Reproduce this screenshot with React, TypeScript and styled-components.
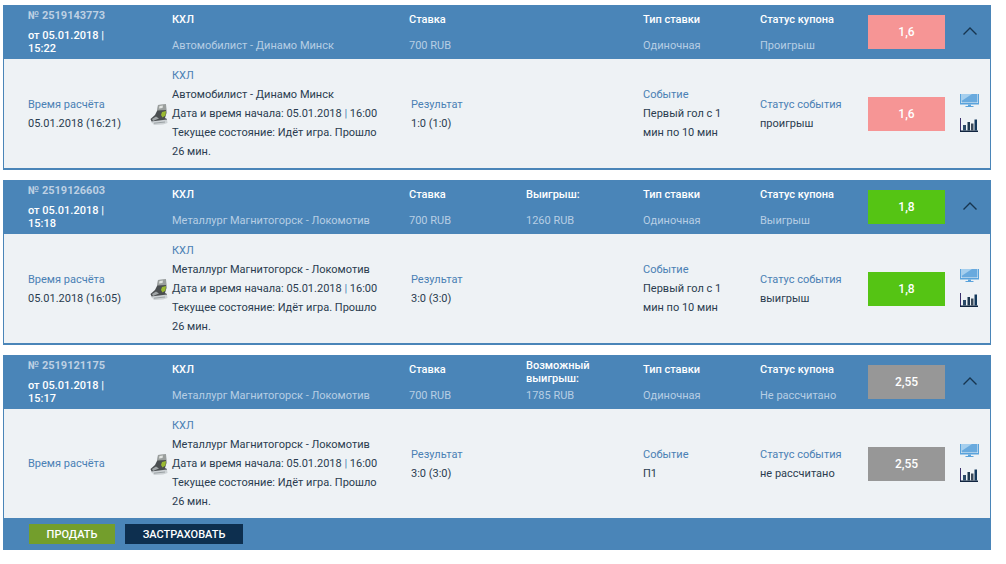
import React from 'react';
import styled, { createGlobalStyle } from 'styled-components';

const GlobalStyle = createGlobalStyle`
  html, body {
    margin: 0;
    padding: 0;
    background: #fff;
  }
  body {
    font-family: Roboto, "Liberation Sans", sans-serif;
    font-size: 11px;
  }
`;

type Coupon = {
  id: string;
  date: string;
  match: string;
  stake: string;
  winLabel?: string;
  winTall?: boolean;
  win?: string;
  status: string;
  coef: string;
  coefColor: string;
  calcTime?: string;
  result: string;
  event: string[];
  eventStatus: string;
  footer?: boolean;
};

const coupons: Coupon[] = [
  {
    id: '2519143773',
    date: 'от 05.01.2018 | 15:22',
    match: 'Автомобилист - Динамо Минск',
    stake: '700 RUB',
    status: 'Проигрыш',
    coef: '1,6',
    coefColor: '#f69595',
    calcTime: '05.01.2018 (16:21)',
    result: '1:0 (1:0)',
    event: ['Первый гол с 1', 'мин по 10 мин'],
    eventStatus: 'проигрыш',
  },
  {
    id: '2519126603',
    date: 'от 05.01.2018 | 15:18',
    match: 'Металлург Магнитогорск - Локомотив',
    stake: '700 RUB',
    winLabel: 'Выигрыш:',
    win: '1260 RUB',
    status: 'Выигрыш',
    coef: '1,8',
    coefColor: '#55c414',
    calcTime: '05.01.2018 (16:05)',
    result: '3:0 (3:0)',
    event: ['Первый гол с 1', 'мин по 10 мин'],
    eventStatus: 'выигрыш',
  },
  {
    id: '2519121175',
    date: 'от 05.01.2018 | 15:17',
    match: 'Металлург Магнитогорск - Локомотив',
    stake: '700 RUB',
    winLabel: 'Возможный выигрыш:',
    winTall: true,
    win: '1785 RUB',
    status: 'Не рассчитано',
    coef: '2,55',
    coefColor: '#979797',
    result: '3:0 (3:0)',
    event: ['П1'],
    eventStatus: 'не рассчитано',
    footer: true,
  },
];

const Skate = () => (
  <svg width="18" height="21" viewBox="0 0 18 21">
    <path d="M8 1 L16 0.5 L16.5 9 L15 14 L17 15 L17 17 L2 18.5 L0.5 15 L5 11 L7.5 6 Z" fill="#4a4e50" />
    <path d="M8 1 L16 0.5 L16 6 L7.5 6.5 Z" fill="#9a9f9d" />
    <path d="M9.5 2 L13 1.5 L12.5 4 L9 4.5 Z" fill="#e2e5e2" />
    <path d="M12 8 L16 7 L15.5 11.5 L12.5 13.5 L11 11 Z" fill="#9aba32" />
    <path d="M2 15 L6 12.5 L9 14.5 L3 17 Z" fill="#a0a5a7" />
    <path d="M1 17.5 L17 15.5 L17.5 19 L13 20.5 L4 21 Z" fill="#cdd2d5" />
    <path d="M4 19.2 L15 18" stroke="#9aa1a4" strokeWidth="1" />
  </svg>
);

const MonitorIcon = () => (
  <svg width="19" height="13" viewBox="0 0 19 13">
    <rect x="0" y="0" width="1" height="9" fill="#5aa3dc" />
    <rect x="18" y="0" width="1" height="9" fill="#5aa3dc" />
    <rect x="0" y="9" width="19" height="1.5" fill="#5aa3dc" />
    <rect x="1.5" y="0" width="16" height="8.5" fill="#69aade" />
    <path d="M1.5 0 L12 0 L1.5 7 Z" fill="#a5cfee" />
    <rect x="8" y="10.5" width="3" height="1.5" fill="#5aa3dc" />
    <rect x="5.5" y="12" width="8" height="1" fill="#5aa3dc" />
  </svg>
);

const ChartIcon = () => (
  <svg width="18" height="14" viewBox="0 0 18 14">
    <rect x="0" y="0" width="1" height="14" fill="#3a2f6b" />
    <rect x="0" y="12.5" width="18" height="1.5" fill="#10243f" />
    <rect x="3" y="7" width="3" height="5.5" fill="#2b4a68" />
    <rect x="7.5" y="4" width="2.5" height="8.5" fill="#1f3850" />
    <rect x="11" y="5.5" width="2.5" height="7" fill="#3b4a5a" />
    <rect x="14.5" y="1.5" width="2.5" height="11" fill="#14395c" />
  </svg>
);

const Chevron = () => (
  <svg width="14" height="8" viewBox="0 0 14 8">
    <path d="M0.5 7.5 L7 1 L13.5 7.5" fill="none" stroke="#17354f" strokeWidth="1.4" />
  </svg>
);

const App = () => (
  <>
    <GlobalStyle />
    <Page>
      {coupons.map((c) => (
        <Card key={c.id} $footer={c.footer}>
          <Header>
            <IdCol>
              <IdNumber>№ {c.id}</IdNumber>
              <IdDate>{c.date}</IdDate>
            </IdCol>
            <HeadCol>
              <HeadLabel>КХЛ</HeadLabel>
              <HeadValue>{c.match}</HeadValue>
            </HeadCol>
            <HeadCol>
              <HeadLabel>Ставка</HeadLabel>
              <HeadValue>{c.stake}</HeadValue>
            </HeadCol>
            <HeadCol>
              {c.winLabel && <HeadLabel $tall={c.winTall}>{c.winLabel}</HeadLabel>}
              {c.win && <HeadValue>{c.win}</HeadValue>}
            </HeadCol>
            <HeadCol>
              <HeadLabel>Тип ставки</HeadLabel>
              <HeadValue>Одиночная</HeadValue>
            </HeadCol>
            <HeadCol>
              <HeadLabel>Статус купона</HeadLabel>
              <HeadValue>{c.status}</HeadValue>
            </HeadCol>
            <CoefBox $color={c.coefColor}>{c.coef}</CoefBox>
            <Toggle>
              <Chevron />
            </Toggle>
          </Header>
          <Body>
            <Info>
              <InfoLabel>Время расчёта</InfoLabel>
              {c.calcTime && <InfoText>{c.calcTime}</InfoText>}
            </Info>
            <SkateWrap>
              <Skate />
            </SkateWrap>
            <MatchInfo>
              <InfoLabel>КХЛ</InfoLabel>
              <InfoText>{c.match}</InfoText>
              <InfoText>
                Дата и время начала: 05.01.2018 <Pipe>|</Pipe> 16:00
              </InfoText>
              <InfoText>Текущее состояние: Идёт игра. Прошло 26 мин.</InfoText>
            </MatchInfo>
            <Info>
              <InfoLabel>Результат</InfoLabel>
              <InfoText>{c.result}</InfoText>
            </Info>
            <Info>
              <InfoLabel>Событие</InfoLabel>
              {c.event.map((line) => (
                <InfoText key={line}>{line}</InfoText>
              ))}
            </Info>
            <Info>
              <InfoLabel>Статус события</InfoLabel>
              <InfoText>{c.eventStatus}</InfoText>
            </Info>
            <CoefBox $color={c.coefColor}>{c.coef}</CoefBox>
            <Tools>
              <MonitorIcon />
              <ChartIcon />
            </Tools>
          </Body>
          {c.footer && (
            <Footer>
              <SellButton>Продать</SellButton>
              <InsureButton>Застраховать</InsureButton>
            </Footer>
          )}
        </Card>
      ))}
    </Page>
  </>
);

export default App;

const Page = styled.div`
  padding: 5px 15px 14px 3px;
  display: flex;
  flex-direction: column;
  gap: 10px;
`;

const Card = styled.div<{ $footer?: boolean }>`
  width: 988px;
  box-sizing: border-box;
  border: 1px solid #4a85b8;
  border-top: 0;
  border-bottom-width: ${(p) => (p.$footer ? '0' : '2px')};
`;

const Header = styled.div`
  height: 54px;
  margin: 0 -1px;
  padding-left: 25px;
  background: #4a85b8;
  display: grid;
  grid-template-columns: 144px 237px 117px 117px 117px 108px 77px 1fr;
  align-items: center;
`;

const IdCol = styled.div`
  height: 54px;
  box-sizing: border-box;
  padding-top: 4px;
  width: 92px;
  font-weight: 500;
  line-height: 13px;
`;

const IdNumber = styled.div`
  color: #bdd0e3;
  font-weight: 700;
  margin-bottom: 7px;
`;

const IdDate = styled.div`
  color: #fff;
`;

const HeadCol = styled.div`
  height: 54px;
  display: flex;
  flex-direction: column;
  line-height: 13px;
`;

const HeadLabel = styled.div<{ $tall?: boolean }>`
  padding-top: ${(p) => (p.$tall ? '4px' : '8px')};
  color: #fff;
  font-weight: 500;
`;

const HeadValue = styled.div`
  margin-top: auto;
  padding-bottom: 7px;
  color: #b7cee4;
`;

const CoefBox = styled.div<{ $color: string }>`
  width: 77px;
  height: 34px;
  background: ${(p) => p.$color};
  color: #fff;
  font-weight: 500;
  font-size: 12px;
  display: flex;
  align-items: center;
  justify-content: center;
`;

const Toggle = styled.div`
  display: flex;
  justify-content: center;
  box-sizing: border-box;
  padding-left: 4px;
  padding-bottom: 2px;
  width: 46px;
`;

const Body = styled.div`
  box-sizing: border-box;
  height: 109px;
  padding-left: 24px;
  background: #eef2f5;
  display: grid;
  grid-template-columns: 122px 22px 239px 232px 117px 108px 77px 1fr;
  align-items: center;
`;

const Info = styled.div`
  line-height: 19px;
`;

const MatchInfo = styled(Info)`
  max-width: 210px;
`;

const InfoLabel = styled.div`
  color: #4a80b4;
`;

const InfoText = styled.div`
  color: #2a3c4f;
`;

const Pipe = styled.span`
  color: #4a80b4;
`;

const SkateWrap = styled.div`
  display: flex;
  padding-top: 1px;
  svg {
    display: block;
  }
`;

const Tools = styled.div`
  display: flex;
  flex-direction: column;
  align-items: flex-start;
  gap: 11px;
  padding: 0 0 1px 15px;
  svg {
    display: block;
  }
`;

const Footer = styled.div`
  height: 32px;
  margin: 0 -1px;
  padding-left: 26px;
  background: #4a85b8;
  display: flex;
  align-items: center;
  gap: 10px;
`;

const SellButton = styled.div`
  width: 86px;
  height: 20px;
  background: #739e2c;
  color: #fff;
  font-weight: 500;
  text-transform: uppercase;
  display: flex;
  align-items: center;
  justify-content: center;
`;

const InsureButton = styled(SellButton)`
  width: 118px;
  background: #0d2f4f;
`;
